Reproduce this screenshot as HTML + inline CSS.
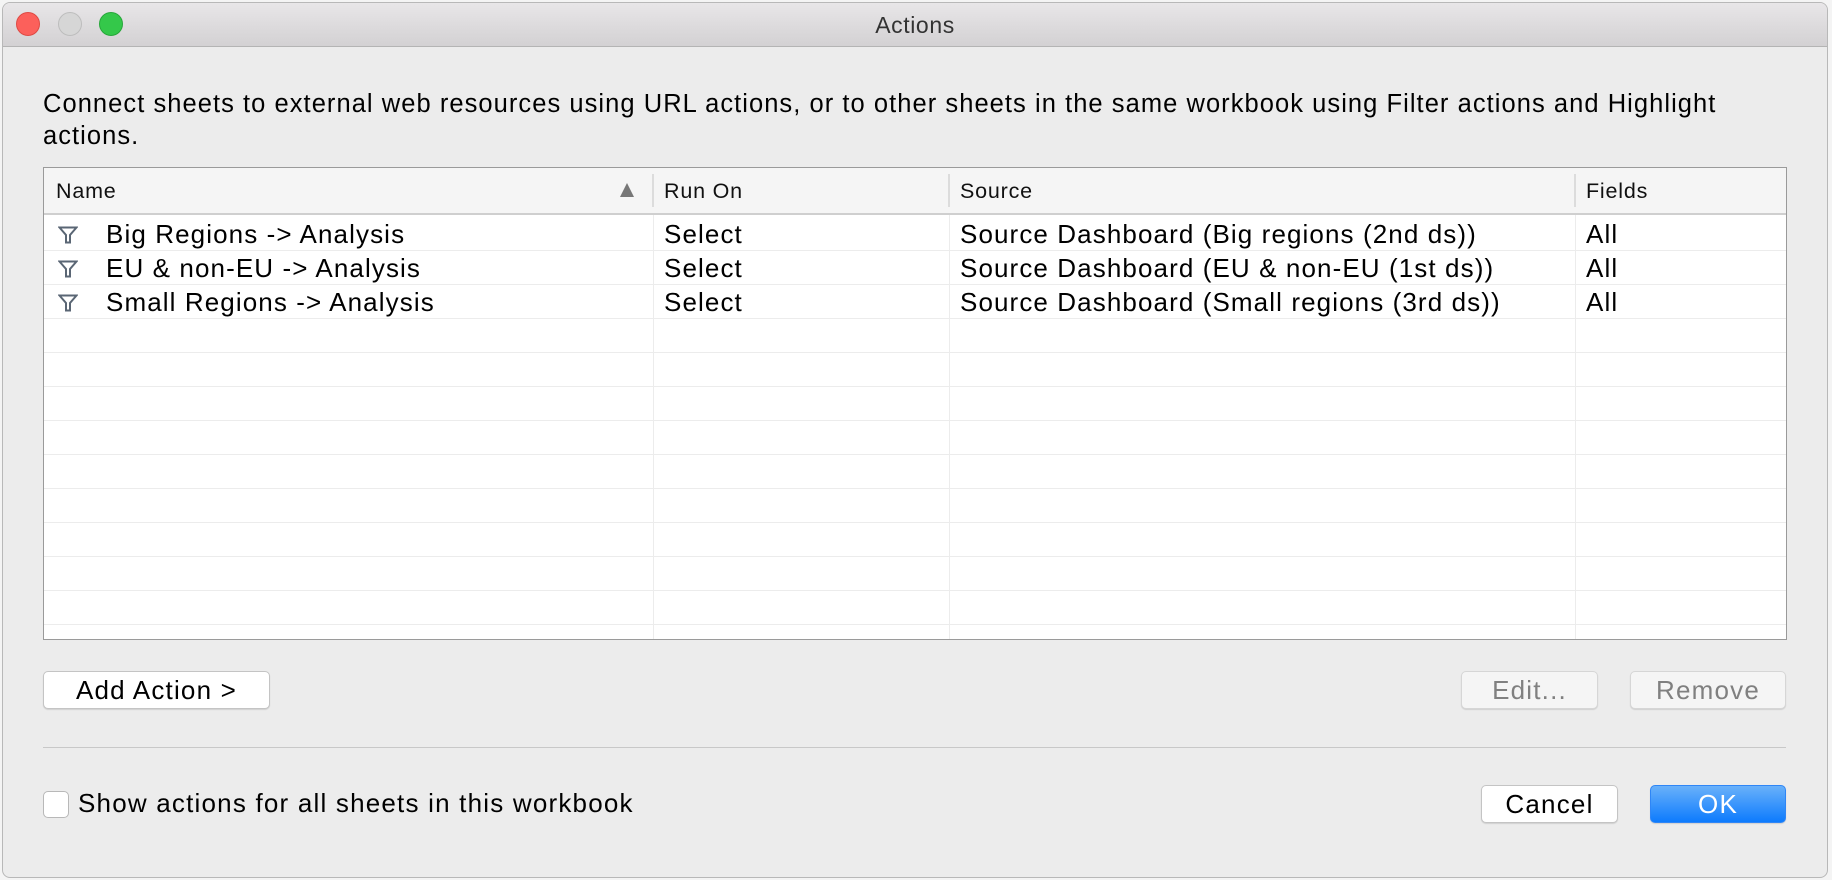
<!DOCTYPE html>
<html><head><meta charset="utf-8"><style>
*{margin:0;padding:0;box-sizing:border-box}
body{width:1832px;height:880px;background:#f4f4f4;font-family:"Liberation Sans",sans-serif;position:relative;overflow:hidden;color:#000}
.win{position:absolute;left:2px;top:2px;width:1826px;height:876px;background:#ececec;border:1px solid #b8b8b8;border-radius:8px;overflow:hidden}
.tb{position:absolute;left:0;top:0;right:0;height:44px;background:linear-gradient(#e8e6e8,#d3d1d3);border-bottom:1px solid #b4b4b4;text-align:center;font-size:23px;line-height:44px;color:#333;letter-spacing:0.6px}
.dot{position:absolute;top:9px;width:24px;height:24px;border-radius:50%}
.a{position:absolute;white-space:nowrap}
.desc{left:43px;top:88px;font-size:25.5px;line-height:32px;width:1745px;white-space:normal;letter-spacing:1.05px}
.tbl{position:absolute;left:43px;top:167px;width:1744px;height:473px;background:#fff;border:1px solid #9a9a9a}
.hd{position:absolute;left:0;top:0;right:0;height:47px;background:#f5f5f5;border-bottom:2px solid #cfcfcf}
.hd span{position:absolute;top:11px;font-size:21.5px;color:#111;letter-spacing:0.8px}
.sep{position:absolute;top:6px;height:33px;width:2px;background:#dcdcdc}
.row{position:absolute;left:0;right:0;height:34px;border-bottom:1px solid #ececec}
.row span{position:absolute;top:2px;font-size:26px;letter-spacing:1.1px}
.vl{position:absolute;top:47px;bottom:0;width:1px;background:#ececec}
.btn{position:absolute;height:38px;background:#fff;border:1px solid #c4c4c4;border-radius:5px;font-size:26px;text-align:center;line-height:36px;letter-spacing:1.2px;box-shadow:0 1px 1px rgba(0,0,0,.12)}
.dis{background:#f5f5f5;color:#808080;border-color:#d6d6d6}
</style></head><body>
<div class="win">
<div class="tb">Actions
<div class="dot" style="left:13px;background:#fc605b;border:1px solid #de4a44"></div>
<div class="dot" style="left:55px;background:#d6d6d6;border:1px solid #bdbdbd"></div>
<div class="dot" style="left:96px;background:#34c84a;border:1px solid #27a73a"></div>
</div>
</div>
<div class="a desc">Connect sheets to external web resources using URL actions, or to other sheets in the same workbook using Filter actions and Highlight actions.</div>
<div class="tbl">
<div class="hd">
<span style="left:12px">Name</span>
<svg style="position:absolute;left:575px;top:14px" width="16" height="16"><path d="M8 1 L15 15 L1 15Z" fill="#777"/></svg>
<div class="sep" style="left:608px"></div><span style="left:620px">Run On</span>
<div class="sep" style="left:904px"></div><span style="left:916px">Source</span>
<div class="sep" style="left:1530px"></div><span style="left:1542px">Fields</span>
</div>
<div class="vl" style="left:609px"></div><div class="vl" style="left:905px"></div><div class="vl" style="left:1531px"></div>
<div class="row" style="top:49px"><svg style="position:absolute;left:14px;top:9px" width="20" height="18"><path d="M1.5 1.5 H18.5 L12 9 V16.5 H8 V9 Z" fill="none" stroke="#5a6674" stroke-width="2"/></svg><span style="left:62px">Big Regions -&gt; Analysis</span><span style="left:620px">Select</span><span style="left:916px">Source Dashboard (Big regions (2nd ds))</span><span style="left:1542px">All</span></div>
<div class="row" style="top:83px"><svg style="position:absolute;left:14px;top:9px" width="20" height="18"><path d="M1.5 1.5 H18.5 L12 9 V16.5 H8 V9 Z" fill="none" stroke="#5a6674" stroke-width="2"/></svg><span style="left:62px">EU &amp; non-EU -&gt; Analysis</span><span style="left:620px">Select</span><span style="left:916px">Source Dashboard (EU &amp; non-EU (1st ds))</span><span style="left:1542px">All</span></div>
<div class="row" style="top:117px"><svg style="position:absolute;left:14px;top:9px" width="20" height="18"><path d="M1.5 1.5 H18.5 L12 9 V16.5 H8 V9 Z" fill="none" stroke="#5a6674" stroke-width="2"/></svg><span style="left:62px">Small Regions -&gt; Analysis</span><span style="left:620px">Select</span><span style="left:916px">Source Dashboard (Small regions (3rd ds))</span><span style="left:1542px">All</span></div>
<div class="row" style="top:151px"></div><div class="row" style="top:185px"></div><div class="row" style="top:219px"></div><div class="row" style="top:253px"></div><div class="row" style="top:287px"></div><div class="row" style="top:321px"></div><div class="row" style="top:355px"></div><div class="row" style="top:389px"></div><div class="row" style="top:423px"></div>
</div>
<div class="btn" style="left:43px;top:671px;width:227px">Add Action &gt;</div>
<div class="btn dis" style="left:1461px;top:671px;width:137px">Edit...</div>
<div class="btn dis" style="left:1630px;top:671px;width:156px">Remove</div>
<div class="a" style="left:43px;top:747px;width:1743px;height:1px;background:#c8c8c8"></div>
<div class="a" style="left:43px;top:791px;width:26px;height:27px;background:#fff;border:1px solid #b8b8b8;border-radius:5px"></div>
<div class="a" style="left:78px;top:788px;font-size:26px;letter-spacing:1.2px">Show actions for all sheets in this workbook</div>
<div class="btn" style="left:1481px;top:785px;width:137px">Cancel</div>
<div class="btn" style="left:1650px;top:785px;width:136px;background:linear-gradient(#69b1fa,#0d7bfd);border-color:#2f86f6;color:#fff">OK</div>
</body></html>
